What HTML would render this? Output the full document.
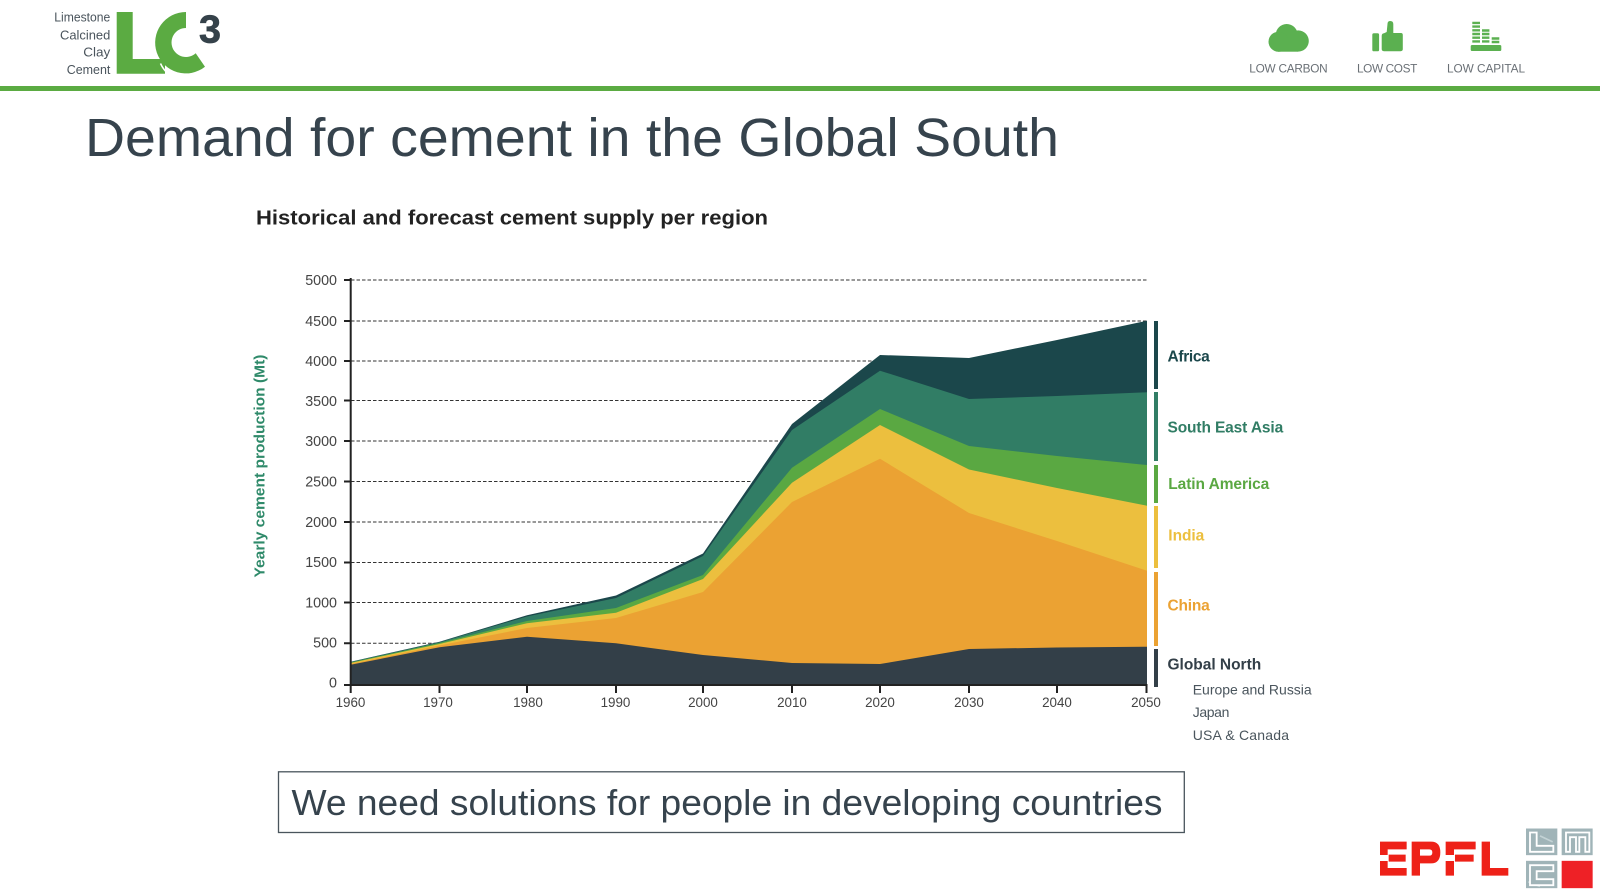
<!DOCTYPE html>
<html>
<head>
<meta charset="utf-8">
<style>
html,body{margin:0;padding:0;background:#fff;width:1600px;height:894px;overflow:hidden}
svg{display:block}
text{font-family:"Liberation Sans",sans-serif}
</style>
</head>
<body>
<svg width="1600" height="894" viewBox="0 0 1600 894" xmlns="http://www.w3.org/2000/svg">
<rect width="1600" height="894" fill="#fff"/>

<!-- Logo -->
<g fill="#4a545c" font-size="12.5">
<text x="54.3" y="21.7" textLength="56" lengthAdjust="spacingAndGlyphs">Limestone</text>
<text x="60" y="39.3" textLength="50.3" lengthAdjust="spacingAndGlyphs">Calcined</text>
<text x="83.3" y="56.7" textLength="27" lengthAdjust="spacingAndGlyphs">Clay</text>
<text x="66.7" y="74" textLength="43.7" lengthAdjust="spacingAndGlyphs">Cement</text>
</g>
<path d="M116.7 12H132.7V59H165V73.7H116.7Z" fill="#5bab42"/>
<path d="M186 12A30.7 30.7 0 1 0 205 66.7L195.7 53.3A14.5 14.5 0 1 1 186 28Z" fill="#5bab42"/>
<path d="M160.5 63.5A31.8 31.8 0 0 0 168 73.7" fill="none" stroke="#fff" stroke-width="1.5"/>
<text x="199" y="42.7" font-size="39" font-weight="bold" fill="#35424a" stroke="#35424a" stroke-width=".7" textLength="22" lengthAdjust="spacingAndGlyphs">3</text>

<!-- Top bar -->
<rect x="0" y="86" width="1600" height="5" fill="#5bab42"/>

<!-- Header icons -->
<g fill="#5bb050">
<circle cx="1286.7" cy="35" r="11"/>
<circle cx="1278.5" cy="41.7" r="10"/>
<circle cx="1298.2" cy="41" r="10.6"/>
<rect x="1278" y="38" width="20" height="13.7"/>
<rect x="1372.3" y="33.3" width="6.8" height="18" rx="1.6"/>
<path d="M1381.7 36Q1381.7 33.5 1384 33.3L1386.7 32L1387.6 23Q1388 21 1390.2 21Q1393.3 21 1393.3 24V33H1401Q1402.8 33 1402.8 35V49Q1402.8 51.2 1400.6 51.2H1384Q1381.7 51.2 1381.7 49Z"/>
<rect x="1470.7" y="45" width="30.6" height="6" rx="1.4"/>
<path d="M1472.3 21.7h7.7v2.4h-7.7zM1472.3 25.4h7.7v2.4h-7.7zM1472.3 29.1h7.7v2.4h-7.7zM1472.3 32.8h7.7v2.4h-7.7zM1472.3 36.5h7.7v2.4h-7.7zM1472.3 40.2h7.7v2.4h-7.7z"/>
<path d="M1482 29.3h7.4v2.4h-7.4zM1482 32.8h7.4v2.4h-7.4zM1482 36.5h7.4v2.4h-7.4zM1482 40.2h7.4v2.4h-7.4z"/>
<path d="M1491.7 37.3h7.6v2.4h-7.6zM1491.7 40.8h7.6v2.4h-7.6z"/>
</g>
<g fill="#6a7076" font-size="11.8">
<text x="1249.3" y="72.7" textLength="78.4">LOW CARBON</text>
<text x="1357" y="72.7" textLength="60.3">LOW COST</text>
<text x="1447" y="72.7" textLength="78">LOW CAPITAL</text>
</g>

<!-- Title -->
<text x="85" y="156" font-size="54" fill="#36434d" textLength="974" lengthAdjust="spacingAndGlyphs">Demand for cement in the Global South</text>

<!-- Chart title -->
<text x="256" y="224.5" font-size="20" font-weight="bold" fill="#222" textLength="512" lengthAdjust="spacingAndGlyphs">Historical and forecast cement supply per region</text>

<!-- Grid -->
<g stroke="#333" stroke-width="1" stroke-dasharray="3.5 2" fill="none">
<path d="M351 280H1147M351 321H1147M351 361H1147M351 400.5H1147M351 441H1147M351 481.5H1147M351 522H1147M351 562.5H1147M351 602.5H1147M351 643.3H1147"/>
</g>

<!-- Areas -->
<polygon fill="#1b474b" points="350.7,661.7 439.5,641.7 527,615.3 616,595.5 703,553.5 792,424 880,355 969,358 1057,340 1147,320.7 1147,685 350.7,685"/>
<polygon fill="#317d65" points="350.7,662 439.5,642.2 527,616.5 616,598 703,556 792,430 880,370.7 969,399 1057,396 1147,392.3 1147,685 350.7,685"/>
<polygon fill="#5aa842" points="350.7,662.5 439.5,643 527,621 616,608 703,575 792,467.7 880,409 969,446 1057,456 1147,465 1147,685 350.7,685"/>
<polygon fill="#ecbf3e" points="350.7,663 439.5,644 527,623.3 616,612.7 703,579 792,482.7 880,425 969,469.5 1057,488 1147,505.7 1147,685 350.7,685"/>
<polygon fill="#eba233" points="350.7,664 439.5,645.5 527,628 616,618 703,592 792,502 880,458.7 969,513 1057,541 1147,570.7 1147,685 350.7,685"/>
<polygon fill="#333f48" points="350.7,664.7 439.5,647.3 527,636.7 616,643.3 703,655 792,663 880,664 969,649 1057,647.5 1147,646.7 1147,685 350.7,685"/>

<!-- Axes -->
<g stroke="#222" stroke-width="2" fill="none">
<path d="M350.7 278V693"/>
<path d="M344 685H1147.5"/>
<path d="M344 280H351M344 321H351M344 361H351M344 400.5H351M344 441H351M344 481.5H351M344 522H351M344 562.5H351M344 602.5H351M344 643.3H351"/>
<path d="M439.5 685V693M527 685V693M616 685V693M703 685V693M792 685V693M880 685V693M969 685V693M1057 685V693M1146.5 685V693"/>
</g>

<!-- Y labels -->
<g fill="#444" font-size="14.3" text-anchor="end">
<text x="337" y="284.8">5000</text>
<text x="337" y="325.8">4500</text>
<text x="337" y="366">4000</text>
<text x="337" y="406">3500</text>
<text x="337" y="446">3000</text>
<text x="337" y="486.3">2500</text>
<text x="337" y="527">2000</text>
<text x="337" y="567">1500</text>
<text x="337" y="607.5">1000</text>
<text x="337" y="647.5">500</text>
<text x="337" y="687.5">0</text>
</g>
<!-- X labels -->
<g fill="#444" font-size="13.4" text-anchor="middle">
<text x="350.5" y="707">1960</text>
<text x="438" y="707">1970</text>
<text x="528" y="707">1980</text>
<text x="615.5" y="707">1990</text>
<text x="703" y="707">2000</text>
<text x="792" y="707">2010</text>
<text x="880" y="707">2020</text>
<text x="969" y="707">2030</text>
<text x="1057" y="707">2040</text>
<text x="1146" y="707">2050</text>
</g>

<!-- Y axis title -->
<text transform="translate(264.5,577.5) rotate(-90)" font-size="15" font-weight="bold" fill="#2f8a6a" textLength="223" lengthAdjust="spacingAndGlyphs">Yearly cement production (Mt)</text>

<!-- Legend bars -->
<rect x="1154" y="321" width="4" height="68" fill="#1b474b"/>
<rect x="1154" y="392" width="4" height="69" fill="#317d65"/>
<rect x="1154" y="465" width="4" height="38" fill="#5aa842"/>
<rect x="1154" y="506" width="4" height="62" fill="#ecbf3e"/>
<rect x="1154" y="572" width="4" height="74" fill="#eba233"/>
<rect x="1154" y="649" width="4" height="38" fill="#333f48"/>

<!-- Legend labels -->
<g font-size="15.5" font-weight="bold">
<text x="1167.5" y="361.7" fill="#1b474b" textLength="42.3">Africa</text>
<text x="1167.5" y="432.7" fill="#317d65" textLength="115.7">South East Asia</text>
<text x="1168.3" y="489" fill="#5aa842" textLength="101">Latin America</text>
<text x="1168.3" y="540.7" fill="#ecbf3e" textLength="36">India</text>
<text x="1167.5" y="610.7" fill="#eba233" textLength="42.3">China</text>
<text x="1167.5" y="669.3" fill="#333f48" textLength="93.7">Global North</text>
</g>
<g font-size="14" fill="#4a555d">
<text x="1192.7" y="694.7" textLength="119">Europe and Russia</text>
<text x="1192.7" y="717" textLength="36.7">Japan</text>
<text x="1192.7" y="740" textLength="96.3">USA &amp; Canada</text>
</g>

<!-- Box -->
<rect x="278.5" y="771.8" width="905.8" height="60.7" fill="#fff" stroke="#4a555d" stroke-width="1.3"/>
<text x="291.5" y="815" font-size="36" fill="#36434d" textLength="871" lengthAdjust="spacingAndGlyphs">We need solutions for people in developing countries</text>

<!-- EPFL -->
<g fill="#ee2118">
<g transform="translate(1375,835) scale(.3333)">
<path d="M15 20H95V43H38V60H15ZM15 78H38V99H95V122H15ZM41 59H92V80H41Z"/>
<path fill-rule="evenodd" d="M110 20H168Q196 20 196 52Q196 85 168 85H135V122H110ZM135 43V62H163Q172 62 172 52Q172 43 163 43Z"/>
<path d="M212 20H302V43H237V60H212ZM212 78H237V122H212ZM240 59H296V80H240Z"/>
<path d="M320 20H345V99H400V122H320Z"/>
</g>
</g>

<!-- LMC -->
<g transform="translate(1520,822.5) scale(.3333)">
<rect x="18" y="18" width="94" height="80" fill="#a0b4b8"/>
<rect x="125" y="18" width="93" height="80" fill="#a0b4b8"/>
<rect x="18" y="115" width="94" height="82" fill="#a0b4b8"/>
<rect x="125" y="115" width="93" height="82" fill="#ee2126"/>
<path d="M60 40L98 58M60 130L95 142M25 178L60 192" stroke="#c3d2d5" stroke-width="5" fill="none"/>
<path d="M30 30H50V70H100V88H30Z" fill="#a0b4b8" stroke="#fff" stroke-width="5.5"/>
<path d="M138 88V30H208V88H196V44H178V88H168V44H150V88Z" fill="#a0b4b8" stroke="#fff" stroke-width="5.5"/>
<path d="M30 128H100V146H50V170H100V188H30Z" fill="#a0b4b8" stroke="#fff" stroke-width="5.5"/>
</g>
</svg>
</body>
</html>
